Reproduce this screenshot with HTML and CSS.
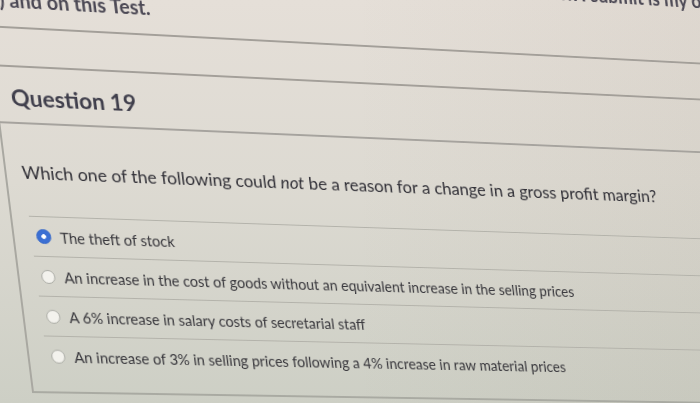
FILE: index.html
```html
<!DOCTYPE html>
<html lang="en">
<head>
<meta charset="utf-8">
<title>Question 19</title>
<link rel="stylesheet" href="styles.css">
</head>
<body>
<div class="screen">
  <div class="prev-question">
    <p class="pledge">I confirm that I have read the quiz instructions and that all of the work I submit is my own (online<br>) and on this Test.</p>
  </div>
  <div class="question">
    <div class="question-header">
      <h2>Question 19</h2>
    </div>
    <div class="question-body">
      <p class="question-text">Which one of the following could <em>not</em> be a reason for a change in a gross profit margin?</p>
      <div class="answers">
        <label class="answer"><input type="radio" name="q19" checked>The theft of stock</label>
        <label class="answer"><input type="radio" name="q19">An increase in the cost of goods without an equivalent increase in the selling prices</label>
        <label class="answer"><input type="radio" name="q19">A 6% increase in salary costs of secretarial staff</label>
        <label class="answer"><input type="radio" name="q19">An increase of 3% in selling prices following a 4% increase in raw material prices</label>
      </div>
    </div>
  </div>
</div>
</body>
</html>
```
FILE: styles.css
```css
html {
  height: 100%;
  background:
    linear-gradient(90deg, rgba(120, 100, 80, 0) 50%, rgba(120, 100, 80, 0.06) 100%),
    linear-gradient(180deg, #e5dfd8 0%, #dddad2 45%, #cdcfc5 100%);
}

body {
  margin: 0;
  height: 403px;
  overflow: hidden;
  font-family: Lato, "Liberation Sans", sans-serif;
  color: #3c3b42;
}

/* the photographed screen is seen at an angle */
.screen {
  display: flow-root;
  width: 800px;
  transform-origin: 0 0;
  transform: matrix3d(1, 0.055, 0, 0.0001, 0.125, 1, 0, 0, 0, 0, 1, 0, -20, 0, 0, 1);
  filter: blur(0.3px);
}

.prev-question {
  margin: -62px 0 0 3px;
  padding: 0 0 7px 14px;
  border-left: 2px solid #a9a8a1;
  border-bottom: 2px solid #a39f99;
}

.pledge {
  margin: 0;
  font-size: 20px;
  font-weight: 700;
  line-height: 40px;
  white-space: nowrap;
  color: #4b4854;
}

.question {
  margin: 36.5px 0 0 3px;
  border-top: 2px solid #a39f99;
  border-left: 2px solid #a9a8a1;
  border-bottom: 2px solid #a9aaa2;
}

.question-header {
  padding: 17px 14px 11px;
  border-bottom: 2px solid #a6a39e;
}

.question-header h2 {
  margin: 0;
  font-size: 23px;
  font-weight: 700;
  line-height: 1.2;
  color: #403f4c;
}

.question-body {
  padding: 37.5px 0 16px 17px;
}

.question-text {
  margin: 0 0 33px -1.5px;
  font-size: 18px;
  line-height: 1.2;
  color: #313037;
}

.answer {
  display: flex;
  align-items: center;
  gap: 9px;
  box-sizing: border-box;
  min-height: 40px;
  padding-left: 5px;
  border-top: 1px solid #b3b2aa;
  font-size: 15px;
  color: #38373c;
}

.answer input {
  appearance: none;
  flex: none;
  width: 14px;
  height: 14px;
  margin: 0;
  border: 1px solid #a9aaa4;
  border-radius: 50%;
  background: #f3f2ed;
}

.answer input:checked {
  width: 15px;
  height: 15px;
  border-color: #3366c8;
  background: radial-gradient(circle, #ffffff 0 2px, #3b6fd3 2.6px);
}
```
